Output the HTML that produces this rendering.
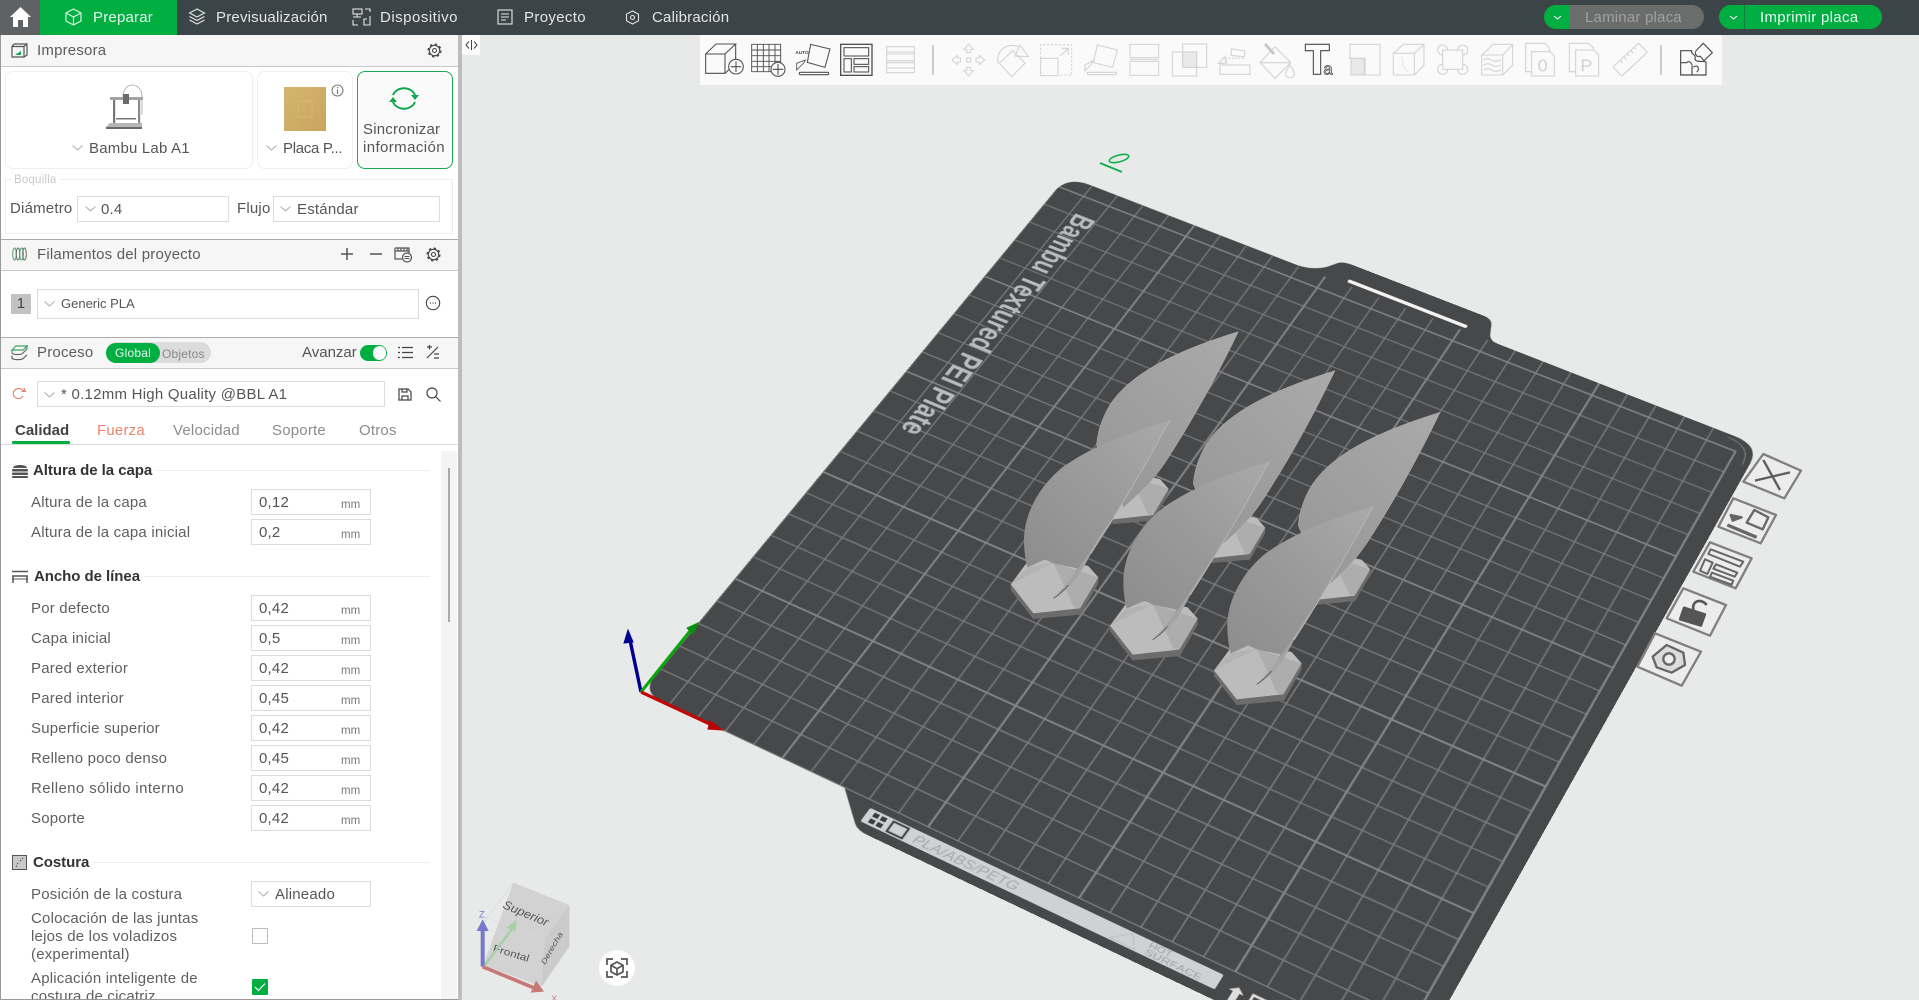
<!DOCTYPE html>
<html lang="es"><head><meta charset="utf-8"><title>Bambu Studio</title>
<style>
html,body{margin:0;padding:0;background:#e8e8e8}
#root{position:relative;width:1919px;height:1000px;overflow:hidden;background:#e8e9e9;font-family:"Liberation Sans",sans-serif;font-size:15px;color:#5c5c5c;letter-spacing:.2px}
.t{position:absolute;white-space:nowrap;line-height:18px;height:18px;margin-top:1px}
.b{position:absolute;box-sizing:border-box}
.ab{position:absolute;overflow:visible}
.f{position:absolute;box-sizing:border-box;left:251px;width:120px;height:26px;border:1px solid #dcdcdc;background:#fff}
.v{left:259px;color:#555}
.mm{left:341px;font-size:11.5px;color:#777;letter-spacing:0}
.l{left:31px;color:#5f5f5f}
.h{font-weight:bold;color:#333;letter-spacing:-.05px}
.n{color:#e4e6e6;letter-spacing:.2px}
.hl{position:absolute;height:1px;background:#eeeeee}
#plate{position:absolute;left:0;top:0;width:1000px;height:1000px;transform-origin:0 0;transform:matrix3d(0.56369,0.23723,0,-0.00007348,-0.51537,0.41951,0,-0.00013944,0,0,1,0,1067,176,0,1)}
</style></head><body>
<div id="root">

<!-- PLATE in plate coordinates -->
<div id="plate">
<svg class="ab" style="left:0;top:0" width="1000" height="1000" viewBox="0 0 1000 1000">
<defs><clipPath id="pc"><rect x="0" y="0" width="1000" height="1000" rx="34"/></clipPath></defs>
<path d="M0 36Q0 0 36 0L350 -1Q372 -3 385 -18L394 -31Q399 -37 412 -37L603 -37Q614 -37 618 -27L624 -10Q628 0 640 0L966 0Q1000 0 1000 34L1000 1042L336 1042Q323 1042 316 1035L280 1000L30 1000Q0 1000 0 970Z" fill="#47484a"/>
<rect x="420" y="-11" width="172" height="6" rx="2" fill="#f2f2f2"/>
<g clip-path="url(#pc)">
<path fill="none" stroke="#7a7b7c" stroke-width="1.8" d="M39.06 0V1000M78.13 0V1000M117.19 0V1000M156.25 0V1000M234.38 0V1000M273.44 0V1000M312.5 0V1000M351.56 0V1000M429.69 0V1000M468.75 0V1000M507.81 0V1000M546.88 0V1000M625 0V1000M664.06 0V1000M703.13 0V1000M742.19 0V1000M820.31 0V1000M859.38 0V1000M898.44 0V1000M937.5 0V1000M0 960.94H977M0 921.88H977M0 882.81H977M0 843.75H977M0 765.63H977M0 726.56H977M0 687.5H977M0 648.44H977M0 570.31H977M0 531.25H977M0 492.19H977M0 453.13H977M0 375H977M0 335.94H977M0 296.88H977M0 257.81H977M0 179.69H977M0 140.63H977M0 101.56H977M0 62.5H977"/>
<path fill="none" stroke="#858687" stroke-width="2.6" d="M0 0V1000M195.31 0V1000M390.63 0V1000M585.94 0V1000M781.25 0V1000M976.56 23V1000M0 804.69H977M0 609.38H977M0 414.06H977M0 218.75H977M0 23.44H977"/>
<path fill="none" stroke="#8a8b8c" stroke-width="2.4" d="M0 1000H1000"/>
</g>
<path fill="none" stroke="#7a7b7c" stroke-width="1.4" d="M960 6Q992 6 992 40"/>
<text transform="translate(46 55) rotate(90)" font-family="Liberation Sans" font-weight="bold" font-size="44" fill="#b9bbbc" textLength="448" lengthAdjust="spacingAndGlyphs">Bambu Textured PEI Plate</text>
<!-- strip -->
<rect x="320" y="1009" width="452" height="21" rx="2" fill="#cfd1d2"/>
<rect x="328" y="1012" width="7" height="6" fill="#3c3d3e"/><rect x="338" y="1012" width="7" height="6" fill="#3c3d3e"/><rect x="328" y="1021" width="7" height="6" fill="#3c3d3e"/><rect x="338" y="1021" width="7" height="6" fill="#3c3d3e"/>
<rect x="353" y="1012" width="20" height="15" fill="none" stroke="#3c3d3e" stroke-width="2.5"/>
<text x="385" y="1026" font-family="Liberation Sans" font-style="italic" font-size="16" fill="#a6a9aa" textLength="135" lengthAdjust="spacingAndGlyphs">PLA/ABS/PETG</text>
<path d="M640 1028L660 1011L672 1028Z" fill="none" stroke="#b4b6b7" stroke-width="1"/>
<text x="683" y="1018" font-family="Liberation Sans" font-size="10" fill="#a0a3a4" textLength="28" lengthAdjust="spacingAndGlyphs">HOT</text>
<text x="683" y="1028" font-family="Liberation Sans" font-size="10" fill="#a0a3a4" textLength="70" lengthAdjust="spacingAndGlyphs">SURFACE</text>
<path d="M785 1022l9 -7 9 7h-5v14h-8v-14z" fill="#dcdcdc"/>
<rect x="812" y="1016" width="34" height="24" fill="none" stroke="#e8e8e8" stroke-width="3"/>
</svg>
</div>

<!-- SCENE -->
<svg class="ab" style="left:0;top:0" width="1919" height="1000" viewBox="0 0 1919 1000">
<defs>
<linearGradient id="fg" x1="0.9" y1="0" x2="0.15" y2="1"><stop offset="0" stop-color="#a8a8a8"/><stop offset=".45" stop-color="#9a9a9a"/><stop offset="1" stop-color="#8c8c8c"/></linearGradient>
<linearGradient id="bg2" x1="0.9" y1="0" x2="0.2" y2="1"><stop offset="0" stop-color="#a9a9a9"/><stop offset="1" stop-color="#979797"/></linearGradient>
<g id="hx">
<polygon points="32,793 100,880 240,865 295,772 295,790 242,884 100,897 32,810" fill="#6c6c6c"/>
<polygon points="32,793 82,726 160,716 265,738 295,772 240,865 100,880" fill="#bcbcbc"/>
<polygon points="160,728 295,772 240,865 222,862" fill="#adadad"/>
<polygon points="160,728 82,742 32,793" fill="#b3b3b3"/>
</g>
<g id="back">
<use href="#hx" transform="translate(255 -150) scale(.85)"/>
<path d="M715,35C570,80 385,150 322,268C300,310 292,345 290,375L370,562C430,512 472,468 512,402C590,280 660,150 715,35Z" fill="url(#bg2)" stroke="#b2b2b2" stroke-width="1.5"/>
</g>
<g id="front">
<use href="#hx"/>
<path d="M510,300C400,335 290,370 190,440C120,495 72,580 72,660C72,690 76,720 82,742L135,718L160,730L232,745C212,785 185,812 160,835C205,812 238,770 272,702C360,565 440,430 510,300Z" fill="url(#fg)"/>
<path d="M160,835C205,812 238,770 272,702L335,600L305,640C265,705 215,780 160,835Z" fill="#a4a4a4"/>
<path d="M272,702C360,565 440,430 510,300" fill="none" stroke="#b5b5b5" stroke-width="3"/>
<path d="M160,835C175,826 190,812 205,795" fill="none" stroke="#666" stroke-width="3"/>
</g>
</defs>

<!-- models -->
<g transform="translate(1000 320) scale(.33333)">
<use href="#back"/><use href="#back" transform="translate(290 117)"/><use href="#back" transform="translate(605 242)"/>
<use href="#front"/><use href="#front" transform="translate(298 124)"/><use href="#front" transform="translate(610 258)"/>
</g>

<!-- axes -->
<g fill="none" stroke-linecap="butt">
<line x1="641" y1="692" x2="630" y2="640" stroke="#00008f" stroke-width="3.4"/>
<polygon points="628,630 624,643 633,642" fill="#00008f" stroke="#00008f" stroke-width="1"/>
<line x1="641" y1="692" x2="690" y2="631" stroke="#0aa50a" stroke-width="3"/>
<polygon points="698,623 687,628 693,634" fill="#0a8f0a" stroke="#0a8f0a"/>
<line x1="641" y1="692" x2="712" y2="725" stroke="#c00606" stroke-width="3.2"/>
<polygon points="723,730 710,721 708,729" fill="#b40404" stroke="#b40404"/>
</g>

<!-- green 0 mark -->
<g fill="none" stroke="#12b04d" stroke-width="1.6">
<ellipse cx="1119" cy="158.5" rx="10" ry="3.4" transform="rotate(-15 1119 158.5)"/>
<line x1="1100" y1="163" x2="1122" y2="172" stroke-width="2"/>
</g>

<!-- right tilted icons -->
<g transform="translate(1600 430) scale(.33333)" stroke="#808080" fill="#ececec" stroke-width="7" stroke-linejoin="round">
<polygon points="490,72 603,122 553,205 430,155"/>
<path d="M465,152L570,127M490,90L540,180" stroke="#5d5d5d" stroke-width="7" fill="none"/>
<polygon points="400,205 528,255 482,340 355,290"/>
<path d="M382,285L470,322" stroke="#666" stroke-width="10" fill="none"/>
<polygon points="463,240 505,262 488,298 440,278" fill="none" stroke="#666"/>
<path d="M392,255L425,262L398,272Z" fill="#666" stroke="#666"/>
<polygon points="330,337 455,385 407,475 280,425"/>
<g fill="none" stroke="#666" stroke-width="6"><polygon points="332,358 430,395 420,410 325,372"/><polygon points="315,388 338,398 322,432 300,422"/><polygon points="348,403 412,428 404,440 340,416"/><polygon points="336,428 400,452 395,464 330,440"/></g>
<polygon points="250,475 378,525 330,617 200,565"/>
<polygon points="252,533 315,553 303,587 240,568" fill="#555" stroke="#555"/>
<path d="M280,540C275,510 305,505 320,525" fill="none" stroke="#555" stroke-width="8"/>
<polygon points="165,610 303,665 245,767 112,710"/>
<polygon points="158,680 200,645 250,668 255,705 215,728 170,712" fill="#dcdcdc" stroke="#666"/>
<circle cx="207" cy="687" r="17" fill="#ececec" stroke="#666"/>
</g>

<!-- nav cube -->
<g transform="translate(460 860) scale(.33333)">
<polygon points="160,68 328,135 328,260 245,380 70,315" fill="#d2d2d2"/>
<polygon points="328,135 328,260 245,380 255,235" fill="#cbcbcb"/>
<path d="M160,68L70,190M240,230L70,170" stroke="#dadada" stroke-width="2" fill="none"/>
<text transform="translate(126 143) rotate(23)" font-family="Liberation Sans" font-style="italic" font-size="36" fill="#555" textLength="145" lengthAdjust="spacingAndGlyphs">Superior</text>
<text transform="translate(97 273) rotate(17)" font-family="Liberation Sans" font-size="30" fill="#555" textLength="112" lengthAdjust="spacingAndGlyphs">Frontal</text>
<text transform="translate(255 315) rotate(-60)" font-family="Liberation Sans" font-style="italic" font-size="22" fill="#555" textLength="108" lengthAdjust="spacingAndGlyphs">Derecha</text>
<line x1="72" y1="318" x2="165" y2="195" stroke="#a5cfa5" stroke-width="7"/><polygon points="170,180 140,202 166,215" fill="#a5cfa5"/>
<line x1="68" y1="320" x2="68" y2="210" stroke="#7777cb" stroke-width="12"/><polygon points="68,178 50,213 86,213" fill="#7777cb"/>
<line x1="68" y1="320" x2="225" y2="385" stroke="#c97878" stroke-width="11"/><polygon points="252,395 228,362 212,398" fill="#c97878"/>
<text x="57" y="172" font-family="Liberation Sans" font-size="28" fill="#7777cb">Z</text>
<text x="274" y="424" font-family="Liberation Sans" font-size="26" fill="#c97878">X</text>
</g>
<!-- camera -->
<circle cx="617" cy="968" r="18" fill="#fff"/>
<g fill="none" stroke="#555" stroke-width="1.7">
<path d="M607 965v-6h6M621 959h6v6M627 971v6h-6M613 977h-6v-6"/>
<path d="M617 962l6 3.3v6.4l-6 3.3-6-3.3v-6.4zM611 965.3l6 3.4 6-3.4M617 968.7v6.3"/>
</g>

<!-- TOOLBAR -->
<rect x="700" y="35" width="1022" height="50" fill="#fafafa"/>
<g transform="translate(680 30) scale(.33333)" fill="none">
<g stroke="#505050" stroke-width="3.2">
<path d="M77 72H135V130H77ZM77 72L108 42H167L135 72M167 42V100L135 130"/>
<circle cx="168" cy="110" r="22" fill="#fafafa"/><path d="M168 94V126M152 110H184"/>
<path d="M215 43H302V125H215ZM232 43V125M250 43V125M267 43V125M285 43V125M215 60H302M215 77H302M215 94H302M215 110H302" stroke-width="2.8"/>
<circle cx="294" cy="118" r="21" fill="#fafafa"/><path d="M294 102V134M278 118H310"/>
<polygon points="392,43 450,57 435,112 382,97"/>
<path d="M350 100L376 90L372 98L350 120Z" stroke-width="2.6"/>
<rect x="358" y="127" width="88" height="7" rx="3"/>
<rect x="482" y="43" width="94" height="93" stroke-width="4"/>
<rect x="492" y="53" width="74" height="25"/><rect x="492" y="86" width="22" height="40"/><rect x="522" y="86" width="44" height="17"/><rect x="522" y="110" width="44" height="16"/>
</g>
<text x="346" y="72" font-family="Liberation Sans" font-weight="bold" font-size="14" fill="#474747">AUTO</text>
<g stroke="#d2d2d2" stroke-width="3.2">
<path d="M620 50H703V128H620ZM620 66H703M620 72H703M620 92H703M620 98H703M620 114H703"/>
<path d="M866 42L880 58H872V68H860V58H852ZM866 138L880 122H872V112H860V122H852ZM816 90L832 76V84H842V96H832V104ZM914 90L898 76V84H888V96H898V104Z" stroke-width="3"/>
<rect x="860" y="84" width="12" height="12"/>
<path d="M955 100C945 70 975 35 1015 50M1020 45L1045 80L1005 78Z"/>
<polygon points="958,100 998,62 1035,100 995,140"/>
<rect x="1082" y="85" width="52" height="52"/>
<path d="M1082 85V44H1175V135H1134" stroke-dasharray="7 5"/>
<path d="M1140 78L1165 55M1145 55H1165V75"/>
<polygon points="1252,45 1312,60 1298,112 1240,98"/>
<path d="M1215 105L1240 92L1232 105L1215 122Z"/>
<rect x="1222" y="127" width="88" height="7" rx="3"/>
<path d="M1350 43H1436V83H1350ZM1350 94H1436V136H1350ZM1350 88H1436" stroke-width="3"/>
<rect x="1477" y="66" width="73" height="72"/><rect x="1508" y="42" width="72" height="70"/>
<rect x="1508" y="66" width="42" height="46" fill="#e9e9e9"/>
</g>
</g>
<g transform="translate(1200 30) scale(.33333)" fill="none">
<g stroke="#d2d2d2" stroke-width="3.2">
<rect x="60" y="105" width="90" height="28"/>
<path d="M80 105V85H135" stroke-dasharray="5 4"/>
<polygon points="92,60 133,58 135,75 95,80" transform="rotate(12 110 68)"/>
<path d="M55 100L75 80L78 100Z"/>
<polygon points="225,50 272,98 225,145 180,98"/>
<path d="M195 42L222 72" stroke-width="8" stroke="#c4c4c4"/>
<path d="M270 105C260 120 255 128 258 135C262 146 280 146 283 135C285 128 278 118 270 105Z" fill="#fafafa"/>
<path d="M180 98H272"/>
<path d="M450 43H540V135H495V85H450Z"/>
<rect x="453" y="85" width="40" height="50" fill="#e9e9e9"/>
<path d="M580 70H643V135H580ZM580 70L610 43H672V105L643 135M643 70L672 43"/>
<path d="M605 80L610 110L625 125" stroke-dasharray="3 4"/>
<circle cx="728" cy="60" r="15"/><circle cx="788" cy="60" r="15"/><circle cx="728" cy="118" r="15"/><circle cx="788" cy="118" r="15"/>
<rect x="728" y="60" width="60" height="58" fill="#fafafa"/>
<path d="M845 75H908V135H845ZM845 75L880 43H938V105L908 135M908 75L938 43M850 90Q865 82 875 90T903 90M850 105Q865 97 875 105T903 105M850 120Q865 112 875 120T903 120"/>
<path d="M977 40H1035L1048 53V65M977 40V125H995M995 65H1050L1063 78V138H995Z" fill="#fafafa"/>
<path d="M1108 40H1165L1180 53V60M1108 40V125H1127M1127 60H1182L1196 75V138H1127Z" fill="#fafafa"/>
<rect x="1238" y="72" width="105" height="38" rx="3" transform="rotate(-43 1288 90)"/>
<path d="M1262 92l6 6M1272 82l8 8M1282 72l6 6M1292 62l8 8M1302 52l6 6" stroke-width="3"/>
</g>
<text x="1013" y="124" font-family="Liberation Sans" font-size="54" fill="#d2d2d2">0</text>
<text x="1141" y="124" font-family="Liberation Sans" font-size="54" fill="#d2d2d2">P</text>
<path d="M316 43H388V62H362V133H340V62H316Z" stroke="#484848" stroke-width="3.2" fill="#fafafa"/>
<text x="370" y="134" font-family="Liberation Sans" font-size="50" fill="#fafafa" stroke="#484848" stroke-width="2.4">a</text>
<g stroke="#4a4a4a" stroke-width="3.4">
<path d="M1442 62H1475C1470 72 1490 72 1485 88C1490 98 1510 92 1518 96V135H1442Z"/>
<path d="M1442 98H1460C1470 88 1478 105 1476 110V135M1480 112C1495 100 1500 120 1490 126"/>
<path d="M1490 60L1510 40L1537 68L1512 92L1500 78C1492 85 1480 70 1490 60Z"/>
</g>
</g>
<line x1="933" y1="45" x2="933" y2="75" stroke="#b5b5b5" stroke-width="1.4"/>
<line x1="1661" y1="45" x2="1661" y2="75" stroke="#b5b5b5" stroke-width="1.4"/>
</svg>

<!-- collapse button -->
<div class="b" style="left:462px;top:35px;width:18px;height:20px;background:#fbfbfb"></div>
<svg class="ab" style="left:465px;top:40px" width="13" height="10" fill="none" stroke="#444" stroke-width="1"><path d="M4 1.500L1 5l3 3.500M9 1.500L12 5l-3 3.500M6.500 0v10"/></svg>

<!-- SIDEBAR -->
<div class="b" style="left:0;top:35px;width:458px;height:965px;background:#fff;border-left:1px solid #9a9a9a;border-bottom:1px solid #9a9a9a"></div>
<div class="b" style="left:458px;top:35px;width:4px;height:965px;background:#bcbcbc"></div>

<!-- Impresora -->
<div class="b" style="left:1px;top:35px;width:457px;height:32px;background:#f6f6f6;border-bottom:1px solid #c9c9c9"></div>
<svg class="ab" style="left:11px;top:43px" width="17" height="16" fill="none" stroke="#555" stroke-width="1.200"><path d="M1 3.500H13V14H1ZM1 3.500L3 1H16V12L13 14M13 3.500L16 1"/><path d="M4 12l6-4v4z" fill="#12a84c" stroke="none"/></svg>
<div class="t" style="left:37px;top:41px">Impresora</div>
<svg class="ab" style="left:426px;top:42px" width="17" height="17" viewBox="-8.500 -8.500 17 17" fill="none" stroke="#444"><circle r="5.200" stroke-width="1.100"/><circle r="6.400" stroke-width="1.300" stroke-dasharray="2.500 2.520"/><circle r="2" stroke-width="1.100"/></svg>

<div class="b" style="left:5px;top:71px;width:248px;height:98px;border:1px solid #efefef;border-radius:8px"></div>
<div class="b" style="left:257px;top:71px;width:96px;height:98px;border:1px solid #efefef;border-radius:8px"></div>
<div class="b" style="left:357px;top:71px;width:96px;height:98px;border:1px solid #18a957;border-radius:8px;background:#fafafa"></div>

<svg class="ab" style="left:104px;top:83px" width="42" height="48" fill="none">
<path d="M19 14C19 -2 38 -2 38 14V32" stroke="#a5a5a5" stroke-width=".8"/>
<rect x="9" y="16" width="2.200" height="25" fill="#777"/><rect x="34" y="16" width="2.200" height="25" fill="#888"/>
<rect x="6" y="14" width="33" height="3" fill="#a2a2a2"/>
<rect x="19" y="11" width="6" height="10" fill="#6a6a6a"/>
<rect x="12" y="35" width="20" height="1.500" fill="#777"/>
<path d="M2 44L6 40H38V44Z" fill="#b5b5b5"/><rect x="2" y="44" width="36" height="2" fill="#6a6a6a"/>
</svg>
<svg class="ab" style="left:72px;top:145px" width="11" height="7" fill="none" stroke="#aaa"><path d="M.5 .5L5.500 5 10.500 .5"/></svg>
<div class="t" style="left:89px;top:139px;color:#555">Bambu Lab A1</div>

<svg class="ab" style="left:284px;top:86px" width="43" height="46"><defs><linearGradient id="gold" x1="0" y1="0" x2="1" y2="1"><stop offset="0" stop-color="#d4b56f"/><stop offset="1" stop-color="#c8a55f"/></linearGradient></defs><rect x="0" y="1" width="42" height="44" fill="url(#gold)"/><rect x="14" y="15" width="14" height="16" fill="none" stroke="#d9bf87" stroke-width=".6"/></svg>
<svg class="ab" style="left:331px;top:84px" width="13" height="13" fill="none" stroke="#777"><circle cx="6.500" cy="6.500" r="5.500"/><path d="M6.500 5.500V10M6.500 3V4.200" stroke-width="1.200"/></svg>
<svg class="ab" style="left:266px;top:145px" width="11" height="7" fill="none" stroke="#aaa"><path d="M.5 .5L5.500 5 10.500 .5"/></svg>
<div class="t" style="left:283px;top:139px;color:#555;letter-spacing:-.3px">Placa P...</div>

<svg class="ab" style="left:389px;top:85px" width="31" height="28" fill="none" stroke="#10a84e" stroke-width="2"><path d="M4 10C8 1 22 1 26 10"/><path d="M26 17C22 26 8 26 4 17"/><path d="M22 10H30L26 15ZM0 17H8L4 12Z" fill="#10a84e" stroke="none"/></svg>
<div class="t" style="left:363px;top:120px;color:#555">Sincronizar</div>
<div class="t" style="left:363px;top:138px;color:#555;letter-spacing:.4px">información</div>

<div class="b" style="left:5px;top:179px;width:448px;height:55px;border:1px solid #eeeeee"></div>
<div class="t" style="left:11px;top:170px;font-size:11.5px;color:#c9c9c9;background:#fff;padding:0 3px">Boquilla</div>
<div class="t" style="left:10px;top:199px;color:#555">Diámetro</div>
<div class="b" style="left:77px;top:196px;width:152px;height:26px;border:1px solid #dcdcdc"></div>
<svg class="ab" style="left:85px;top:206px" width="11" height="7" fill="none" stroke="#aaa"><path d="M.5 .5L5.500 5 10.500 .5"/></svg>
<div class="t" style="left:101px;top:200px;color:#555">0.4</div>
<div class="t" style="left:237px;top:199px;color:#555">Flujo</div>
<div class="b" style="left:273px;top:196px;width:167px;height:26px;border:1px solid #dcdcdc"></div>
<svg class="ab" style="left:280px;top:206px" width="11" height="7" fill="none" stroke="#aaa"><path d="M.5 .5L5.500 5 10.500 .5"/></svg>
<div class="t" style="left:297px;top:200px;color:#555">Estándar</div>

<!-- Filamentos -->
<div class="b" style="left:1px;top:239px;width:457px;height:32px;background:#f6f6f6;border-top:1px solid #ababab;border-bottom:1px solid #c9c9c9"></div>
<svg class="ab" style="left:12px;top:247px" width="15" height="14" fill="none" stroke="#3fa46a" stroke-width="1"><ellipse cx="2.500" cy="7" rx="1.800" ry="6"/><ellipse cx="6" cy="7" rx="1.800" ry="6" stroke="#666"/><ellipse cx="9.500" cy="7" rx="1.800" ry="6" stroke="#3fa46a"/><ellipse cx="12.500" cy="7" rx="1.800" ry="6" stroke="#666"/></svg>
<div class="t" style="left:37px;top:245px">Filamentos del proyecto</div>
<svg class="ab" style="left:341px;top:248px" width="45" height="12" fill="none" stroke="#555" stroke-width="1.500"><path d="M6 0V12M0 6H12M29 6H41"/></svg>
<svg class="ab" style="left:394px;top:246px" width="19" height="17" fill="none" stroke="#555" stroke-width="1.200"><path d="M1 2H15V8M1 2V13H8M1 5H15M4 2V5M7 2V5M10 2V5M13 2V5"/><circle cx="13" cy="11.500" r="4.500" fill="#f6f6f6"/><path d="M10.500 10.500H15.500M10.500 12.500H15.500" stroke-width="1"/></svg>
<svg class="ab" style="left:425px;top:246px" width="17" height="17" viewBox="-8.500 -8.500 17 17" fill="none" stroke="#444"><circle r="5.200" stroke-width="1.100"/><circle r="6.400" stroke-width="1.300" stroke-dasharray="2.500 2.520"/><circle r="2" stroke-width="1.100"/></svg>

<div class="b" style="left:11px;top:294px;width:20px;height:20px;background:#c2c2c2;color:#444;text-align:center;line-height:20px">1</div>
<div class="b" style="left:37px;top:289px;width:382px;height:30px;border:1px solid #dcdcdc"></div>
<svg class="ab" style="left:44px;top:301px" width="11" height="7" fill="none" stroke="#aaa"><path d="M.5 .5L5.500 5 10.500 .5"/></svg>
<div class="t" style="left:61px;top:294px;font-size:13px;color:#555;letter-spacing:0">Generic PLA</div>
<svg class="ab" style="left:425px;top:295px" width="16" height="16" fill="none" stroke="#444" stroke-width="1.100"><circle cx="8" cy="8" r="6.700"/><path d="M5 8h1M7.500 8h1M10 8h1" stroke-width="1.300"/></svg>

<!-- Proceso -->
<div class="b" style="left:1px;top:337px;width:457px;height:32px;background:#f6f6f6;border-top:1px solid #ababab;border-bottom:1px solid #c9c9c9"></div>
<svg class="ab" style="left:11px;top:345px" width="17" height="16" fill="none" stroke="#3fa46a" stroke-width="1.200"><path d="M1 5L5 1H16L12 5ZM1 5V8M12 5L16 1V4" /><path d="M1 8C2 10 11 10 12 8L16 4M1 10.500V13.500C3 15 11 15 12 13.500L16 10" stroke="#666"/></svg>
<div class="t" style="left:37px;top:343px">Proceso</div>
<div class="b" style="left:106px;top:342px;width:105px;height:21px;border-radius:11px;background:#dcdcdc"></div>
<div class="b" style="left:106px;top:343px;width:54px;height:20px;border-radius:10px;background:#00ae42;color:#e9f7ee;font-size:12px;line-height:20px;text-align:center">Global</div>
<div class="t" style="left:162px;top:344px;font-size:12px;color:#888">Objetos</div>
<div class="t" style="left:302px;top:343px;color:#555;letter-spacing:0">Avanzar</div>
<div class="b" style="left:360px;top:345px;width:27px;height:16px;border-radius:8px;background:#00ae42"></div>
<div class="b" style="left:373px;top:346px;width:13px;height:14px;border-radius:7px;background:#fff"></div>
<svg class="ab" style="left:398px;top:346px" width="15" height="13" fill="none" stroke="#444" stroke-width="1.300"><path d="M4 1.500H15M4 6.500H15M4 11.500H15M0 1.500H2M0 6.500H2M0 11.500H2"/></svg>
<svg class="ab" style="left:426px;top:346px" width="14" height="14" fill="none" stroke="#444" stroke-width="1.200"><path d="M1 12L12 1M1 1H6M3.500 -1V3.500M8 8H13M8 12H13"/></svg>

<svg class="ab" style="left:12px;top:387px" width="14" height="13" fill="none" stroke="#e77a60" stroke-width="1.100"><path d="M11 9C9 12.500 3 12.500 1.500 8C0.500 4 4 1 8 1.500C10 2 11 3 12 4"/><path d="M9.500 4.500H13.500L12 1" /></svg>
<div class="b" style="left:37px;top:381px;width:348px;height:26px;border:1px solid #dcdcdc"></div>
<svg class="ab" style="left:44px;top:392px" width="11" height="7" fill="none" stroke="#aaa"><path d="M.5 .5L5.500 5 10.500 .5"/></svg>
<div class="t" style="left:61px;top:385px;color:#555;letter-spacing:.25px">* 0.12mm High Quality @BBL A1</div>
<svg class="ab" style="left:398px;top:388px" width="14" height="13" fill="none" stroke="#444" stroke-width="1.200"><path d="M1 1H10L13 4V12H1ZM4 1V4H9V1M4 12V8H10V12"/></svg>
<svg class="ab" style="left:426px;top:387px" width="15" height="15" fill="none" stroke="#444" stroke-width="1.200"><circle cx="6" cy="6" r="5"/><path d="M10 10L14.500 14.500"/></svg>

<div class="t" style="left:15px;top:421px;font-weight:bold;color:#444;letter-spacing:0">Calidad</div>
<div class="t" style="left:97px;top:421px;color:#e8856c">Fuerza</div>
<div class="t" style="left:173px;top:421px;color:#8c8c8c">Velocidad</div>
<div class="t" style="left:272px;top:421px;color:#8c8c8c">Soporte</div>
<div class="t" style="left:359px;top:421px;color:#8c8c8c">Otros</div>
<div class="b" style="left:1px;top:444px;width:457px;height:1px;background:#dcdcdc"></div>
<div class="b" style="left:12px;top:441px;width:58px;height:3px;background:#00ae42;border-radius:1px"></div>

<div class="b" style="left:441px;top:451px;width:16px;height:548px;background:#f4f4f4"></div>
<div class="b" style="left:448px;top:468px;width:2px;height:154px;background:#a9a9a9"></div>

<!-- Altura -->
<svg class="ab" style="left:12px;top:463px" width="16" height="15" fill="#555"><path d="M1 5C1 1 15 1 15 5Z"/><rect x="0" y="6" width="16" height="2.500" rx="1"/><rect x="0" y="9.500" width="16" height="2.500" rx="1"/><rect x="0" y="13" width="16" height="2" rx="1"/></svg>
<div class="t h" style="left:33px;top:461px">Altura de la capa</div>
<div class="hl" style="left:156px;top:470px;width:274px"></div>
<div class="t l" style="top:493px">Altura de la capa</div><div class="f" style="top:489px"></div><div class="t v" style="top:493px">0,12</div><div class="t mm" style="top:495px">mm</div>
<div class="t l" style="top:523px">Altura de la capa inicial</div><div class="f" style="top:519px"></div><div class="t v" style="top:523px">0,2</div><div class="t mm" style="top:525px">mm</div>

<!-- Ancho -->
<svg class="ab" style="left:12px;top:570px" width="16" height="13" fill="none" stroke="#555" stroke-width="1.500"><path d="M0 1.500H16M0 6H16M1 6V13M15 6V13" /><path d="M0 9H16" stroke-width="1"/></svg>
<div class="t h" style="left:34px;top:567px">Ancho de línea</div>
<div class="hl" style="left:143px;top:576px;width:287px"></div>
<div class="t l" style="top:599px">Por defecto</div><div class="f" style="top:595px"></div><div class="t v" style="top:599px">0,42</div><div class="t mm" style="top:601px">mm</div>
<div class="t l" style="top:629px">Capa inicial</div><div class="f" style="top:625px"></div><div class="t v" style="top:629px">0,5</div><div class="t mm" style="top:631px">mm</div>
<div class="t l" style="top:659px">Pared exterior</div><div class="f" style="top:655px"></div><div class="t v" style="top:659px">0,42</div><div class="t mm" style="top:661px">mm</div>
<div class="t l" style="top:689px">Pared interior</div><div class="f" style="top:685px"></div><div class="t v" style="top:689px">0,45</div><div class="t mm" style="top:691px">mm</div>
<div class="t l" style="top:719px">Superficie superior</div><div class="f" style="top:715px"></div><div class="t v" style="top:719px">0,42</div><div class="t mm" style="top:721px">mm</div>
<div class="t l" style="top:749px">Relleno poco denso</div><div class="f" style="top:745px"></div><div class="t v" style="top:749px">0,45</div><div class="t mm" style="top:751px">mm</div>
<div class="t l" style="top:779px;letter-spacing:.4px">Relleno sólido interno</div><div class="f" style="top:775px"></div><div class="t v" style="top:779px">0,42</div><div class="t mm" style="top:781px">mm</div>
<div class="t l" style="top:809px">Soporte</div><div class="f" style="top:805px"></div><div class="t v" style="top:809px">0,42</div><div class="t mm" style="top:811px">mm</div>

<!-- Costura -->
<svg class="ab" style="left:12px;top:855px" width="15" height="15"><rect x=".5" y=".5" width="14" height="14" fill="#c9c9c9" stroke="#555"/><path d="M4 12L6 8M8 6L11 3" stroke="#444" stroke-dasharray="1.500 1.500" fill="none"/></svg>
<div class="t h" style="left:33px;top:853px">Costura</div>
<div class="hl" style="left:93px;top:862px;width:337px"></div>
<div class="t l" style="top:885px">Posición de la costura</div>
<div class="f" style="top:881px"></div>
<svg class="ab" style="left:258px;top:891px" width="11" height="7" fill="none" stroke="#aaa"><path d="M.5 .5L5.500 5 10.500 .5"/></svg>
<div class="t" style="left:275px;top:885px;color:#555">Alineado</div>
<div class="t l" style="top:909px">Colocación de las juntas</div>
<div class="t l" style="top:927px">lejos de los voladizos</div>
<div class="t l" style="top:945px">(experimental)</div>
<div class="b" style="left:252px;top:928px;width:16px;height:16px;border:1px solid #bdbdbd;border-radius:1px;background:#fff"></div>
<div class="t l" style="top:969px">Aplicación inteligente de</div>
<div class="t l" style="top:987px;height:11px;overflow:hidden">costura de cicatriz</div>
<div class="b" style="left:252px;top:979px;width:16px;height:16px;background:#00ae42;border-radius:1px"></div>
<svg class="ab" style="left:254px;top:982px" width="12" height="10" fill="none" stroke="#fff" stroke-width="1.200"><path d="M1 5L4.500 8.500 11 1.500"/></svg>

<!-- TOP BAR -->
<div class="b" style="left:0;top:0;width:1919px;height:35px;background:#3b4446"></div>
<div class="b" style="left:0;top:0;width:40px;height:35px;background:#5f6162"></div>
<svg class="ab" style="left:10px;top:7px" width="21" height="20" fill="#fff"><path d="M10.500 0L21 10H18V20H13V13H8V20H3V10H0Z"/></svg>
<div class="b" style="left:40px;top:0;width:137px;height:35px;background:#00ae42"></div>
<svg class="ab" style="left:65px;top:8px" width="17" height="18" fill="none" stroke="#d8f3e2" stroke-width="1.200"><path d="M8.500 1L16 5V13L8.500 17 1 13V5ZM1 5L8.500 9 16 5M8.500 9V17"/></svg>
<div class="t" style="left:93px;top:8px;color:#e3f6ea;letter-spacing:.2px">Preparar</div>
<svg class="ab" style="left:189px;top:8px" width="16" height="18" fill="none" stroke="#e4e6e6" stroke-width="1.100"><path d="M8 1L15.500 5 8 9 .5 5ZM.5 8.500L8 12.500 15.500 8.500M.5 12L8 16 15.500 12"/></svg>
<div class="t n" style="left:216px;top:8px">Previsualización</div>
<svg class="ab" style="left:352px;top:8px" width="19" height="18" fill="none" stroke="#e4e6e6" stroke-width="1.100"><rect x="1" y="1" width="9" height="5"/><path d="M5 6V9M1 9H9M13 1H18V4M1 12V17H6M18 8V17H12V11H15"/></svg>
<div class="t n" style="left:380px;top:8px;letter-spacing:.5px">Dispositivo</div>
<svg class="ab" style="left:497px;top:9px" width="16" height="16" fill="none" stroke="#e4e6e6" stroke-width="1.100"><rect x="1" y="1" width="14" height="14"/><path d="M4 5H12M4 8H12M4 11H9"/></svg>
<div class="t n" style="left:524px;top:8px;letter-spacing:.35px">Proyecto</div>
<svg class="ab" style="left:625px;top:10px" width="15" height="15" fill="none" stroke="#e4e6e6" stroke-width="1.100"><path d="M7.500 1L13.500 4.200V10.800L7.500 14 1.500 10.800V4.200Z"/><circle cx="7.500" cy="7.500" r="2"/></svg>
<div class="t n" style="left:652px;top:8px">Calibración</div>

<div class="b" style="left:1544px;top:5px;width:26px;height:24px;background:#00ae42;border-radius:12px 0 0 12px"></div>
<svg class="ab" style="left:1553px;top:15px" width="9" height="6" fill="none" stroke="#fff"><path d="M1 1L4.500 4 8 1"/></svg>
<div class="b" style="left:1570px;top:5px;width:134px;height:24px;background:#6b6c6c;border-radius:0 12px 12px 0"></div>
<div class="t" style="left:1585px;top:8px;color:#a0a1a1">Laminar placa</div>
<div class="b" style="left:1719px;top:5px;width:163px;height:24px;background:#00ae42;border-radius:12px"></div>
<div class="b" style="left:1744px;top:5px;width:1px;height:24px;background:#157a3e"></div>
<svg class="ab" style="left:1729px;top:15px" width="9" height="6" fill="none" stroke="#fff"><path d="M1 1L4.500 4 8 1"/></svg>
<div class="t" style="left:1760px;top:8px;color:#eaf8ef;letter-spacing:.3px">Imprimir placa</div>

</div>
</body></html>
